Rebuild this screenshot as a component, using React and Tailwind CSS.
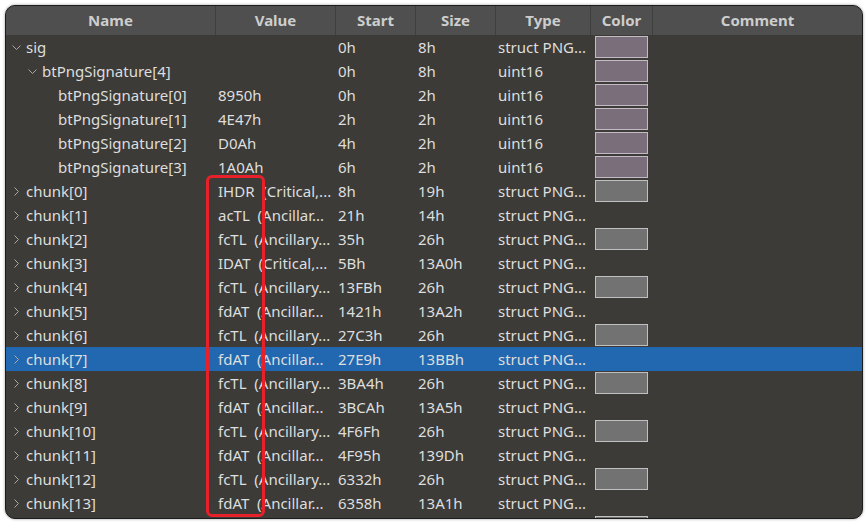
import React from 'react';

const cols = [
  { key: 'name', label: 'Name', w: 'w-[210px]' },
  { key: 'value', label: 'Value', w: 'w-[120px]' },
  { key: 'start', label: 'Start', w: 'w-[80px]' },
  { key: 'size', label: 'Size', w: 'w-[80px]' },
  { key: 'type', label: 'Type', w: 'w-[95px]' },
  { key: 'color', label: 'Color', w: 'w-[62px]' },
  { key: 'comment', label: 'Comment', w: 'flex-1' },
];

const indent = ['pl-[6px]', 'pl-[22px]', 'pl-[38px]'];

const rows = [
  { name: 'sig', level: 0, open: 'down', value: '', start: '0h', size: '8h', type: 'struct PNG...', sw: 'purple' },
  { name: 'btPngSignature[4]', level: 1, open: 'down', value: '', start: '0h', size: '8h', type: 'uint16', sw: 'purple' },
  { name: 'btPngSignature[0]', level: 2, value: '8950h', start: '0h', size: '2h', type: 'uint16', sw: 'purple' },
  { name: 'btPngSignature[1]', level: 2, value: '4E47h', start: '2h', size: '2h', type: 'uint16', sw: 'purple' },
  { name: 'btPngSignature[2]', level: 2, value: 'D0Ah', start: '4h', size: '2h', type: 'uint16', sw: 'purple' },
  { name: 'btPngSignature[3]', level: 2, value: '1A0Ah', start: '6h', size: '2h', type: 'uint16', sw: 'purple' },
  { name: 'chunk[0]', level: 0, open: 'right', value: 'IHDR  (Critical,...', start: '8h', size: '19h', type: 'struct PNG...', sw: 'grey' },
  { name: 'chunk[1]', level: 0, open: 'right', value: 'acTL  (Ancillar...', start: '21h', size: '14h', type: 'struct PNG...' },
  { name: 'chunk[2]', level: 0, open: 'right', value: 'fcTL  (Ancillary...', start: '35h', size: '26h', type: 'struct PNG...', sw: 'grey' },
  { name: 'chunk[3]', level: 0, open: 'right', value: 'IDAT  (Critical,...', start: '5Bh', size: '13A0h', type: 'struct PNG...' },
  { name: 'chunk[4]', level: 0, open: 'right', value: 'fcTL  (Ancillary...', start: '13FBh', size: '26h', type: 'struct PNG...', sw: 'grey' },
  { name: 'chunk[5]', level: 0, open: 'right', value: 'fdAT  (Ancillar...', start: '1421h', size: '13A2h', type: 'struct PNG...' },
  { name: 'chunk[6]', level: 0, open: 'right', value: 'fcTL  (Ancillary...', start: '27C3h', size: '26h', type: 'struct PNG...', sw: 'grey' },
  { name: 'chunk[7]', level: 0, open: 'right', value: 'fdAT  (Ancillar...', start: '27E9h', size: '13BBh', type: 'struct PNG...', selected: true },
  { name: 'chunk[8]', level: 0, open: 'right', value: 'fcTL  (Ancillary...', start: '3BA4h', size: '26h', type: 'struct PNG...', sw: 'grey' },
  { name: 'chunk[9]', level: 0, open: 'right', value: 'fdAT  (Ancillar...', start: '3BCAh', size: '13A5h', type: 'struct PNG...' },
  { name: 'chunk[10]', level: 0, open: 'right', value: 'fcTL  (Ancillary...', start: '4F6Fh', size: '26h', type: 'struct PNG...', sw: 'grey' },
  { name: 'chunk[11]', level: 0, open: 'right', value: 'fdAT  (Ancillar...', start: '4F95h', size: '139Dh', type: 'struct PNG...' },
  { name: 'chunk[12]', level: 0, open: 'right', value: 'fcTL  (Ancillary...', start: '6332h', size: '26h', type: 'struct PNG...', sw: 'grey' },
  { name: 'chunk[13]', level: 0, open: 'right', value: 'fdAT  (Ancillar...', start: '6358h', size: '13A1h', type: 'struct PNG...' },
  // next row is scrolled below the edge: only its swatch top peeks out
  { name: 'chunk[14]', level: 0, value: '', start: '', size: '', type: '', sw: 'grey' },
];

const Chevron = ({ dir }) => (
  <svg width="9" height="9" viewBox="0 0 9 9" className="shrink-0">
    {dir === 'down' ? (
      <path d="M0.5 2.5 L4.5 6.5 L8.5 2.5" fill="none" stroke="#a8a8a8" strokeWidth="1" />
    ) : (
      <path d="M2.5 0.5 L6.5 4.5 L2.5 8.5" fill="none" stroke="#a8a8a8" strokeWidth="1" />
    )}
  </svg>
);

const Row = ({ r, last }) => (
  <div className={`flex h-[24px] items-center text-[15px] text-[#dedede] ${r.selected ? 'bg-[#2268b0]' : ''}`}>
    <div className={`w-[210px] flex items-center ${indent[r.level]} overflow-hidden`}>
      <span className="w-[14px] flex items-center">{r.open && <Chevron dir={r.open} />}</span>
      <span className="whitespace-nowrap">{last ? '' : r.name}</span>
    </div>
    <div className="w-[120px] pl-[2px] whitespace-pre overflow-hidden">{r.value}</div>
    <div className="w-[80px] pl-[2px] whitespace-nowrap">{r.start}</div>
    <div className="w-[80px] pl-[2px] whitespace-nowrap">{r.size}</div>
    <div className="w-[95px] pl-[2px] whitespace-nowrap overflow-hidden">{r.type}</div>
    <div className="w-[62px] pl-[4px] flex items-center">
      {r.sw === 'purple' && <div className="w-[53px] h-[22px] border border-[#c4bcc4] bg-[#7b6e7b]" />}
      {r.sw === 'grey' && <div className="w-[53px] h-[22px] border border-[#c0c0c0] bg-[#727272]" />}
    </div>
    <div className="flex-1" />
  </div>
);

export default function App() {
  return (
    <div className="relative w-[868px] h-[523px] bg-white pt-[5px] pl-[5px] font-['Noto_Sans',sans-serif]">
      <div className="w-[858px] h-[514px] rounded-[10px] border border-[#1c1c1c] bg-[#3c3b37] overflow-hidden shadow-[0_0_3px_rgba(0,0,0,0.4)]">
        <div className="flex h-[29px] bg-[#4f4f4f]">
          {cols.map((c) => (
            <div
              key={c.key}
              className={`${c.w} flex items-center justify-center text-[15px] font-bold text-[#cdcdcd] ${c.key !== 'comment' ? 'border-r border-[#3e3e3e]' : ''}`}
            >
              {c.label}
            </div>
          ))}
        </div>
        <div>
          {rows.map((r, i) => (
            <Row key={r.name} r={r} last={i === rows.length - 1} />
          ))}
        </div>
      </div>
      <div className="absolute left-[206px] top-[175px] w-[59px] h-[342px] border-[3px] border-[#e8202a] rounded-[6px]" />
    </div>
  );
}
